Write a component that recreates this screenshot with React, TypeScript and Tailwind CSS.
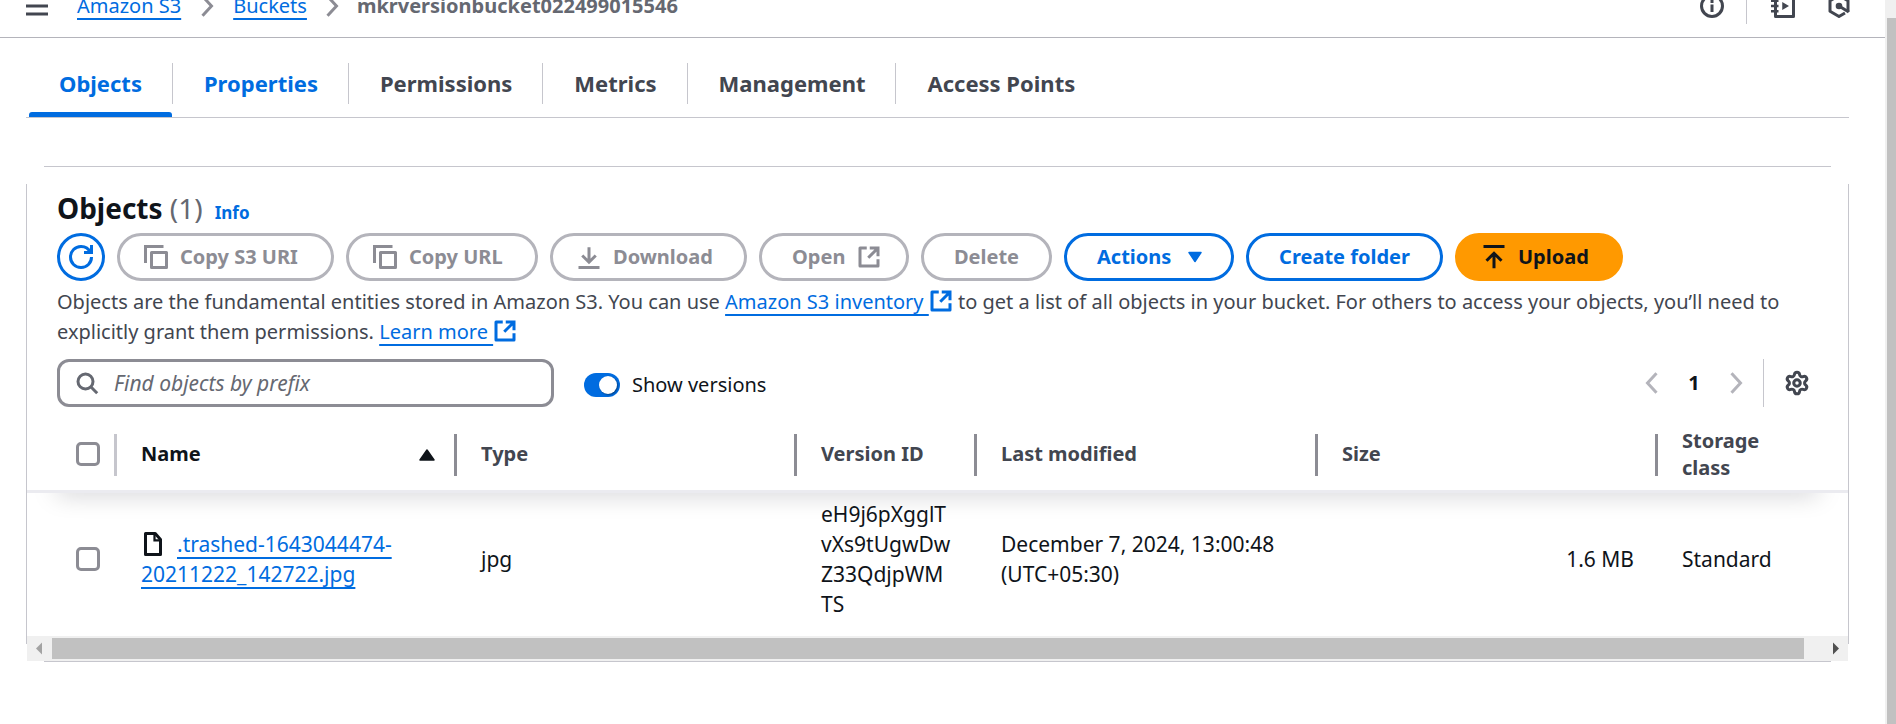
import React from "react";
import { Settings } from "lucide-react";

function Icon({ children, className = "" }: { children: React.ReactNode; className?: string }) {
  return (
    <svg
      viewBox="0 0 16 16"
      fill="none"
      stroke="currentColor"
      strokeWidth="2"
      aria-hidden="true"
      className={`h-6 w-6 shrink-0 ${className}`}
    >
      {children}
    </svg>
  );
}

const CopyIcon = () => (
  <Icon>
    <path d="M1 12V1h12" />
    <rect x="5" y="5" width="10" height="10" strokeLinejoin="round" />
  </Icon>
);

const ExternalIcon = ({ className = "" }: { className?: string }) => (
  <Icon className={className}>
    <path d="M6.500 2H2v12h12v-4.500" strokeLinejoin="round" />
    <path d="M8.500 2H14v5.500M14 2 7.500 8.500" />
  </Icon>
);

const Chevron = ({ left = false, className = "" }: { left?: boolean; className?: string }) => (
  <Icon className={className}>
    <path d={left ? "M11 1.500 5 8l6 6.500" : "M5 1.500 11 8l-6 6.500"} />
  </Icon>
);

const link = "text-[#006ce0] underline decoration-2 underline-offset-[5px]";

const buttonBase =
  "flex h-12 items-center gap-3 rounded-full border-3 text-[20px] font-bold whitespace-nowrap";
const disabledButton = `${buttonBase} border-[#b4b4bb] text-[#8c8c94]`;
const activeButton = `${buttonBase} border-[#006ce0] text-[#006ce0]`;

const tabs = [
  { label: "Objects", tone: "text-[#006ce0]", active: true },
  { label: "Properties", tone: "text-[#006ce0]" },
  { label: "Permissions", tone: "text-[#424650]" },
  { label: "Metrics", tone: "text-[#424650]" },
  { label: "Management", tone: "text-[#424650]" },
  { label: "Access Points", tone: "text-[#424650]" },
];

function TopBar() {
  return (
    <header className="-mt-[26px] flex h-16 items-center border-b border-[#b4b4bb] pr-[34px] pl-[25px]">
      <button aria-label="Open navigation" className="text-[#424650]">
        <svg viewBox="0 0 24 24" className="h-6 w-6" stroke="currentColor" strokeWidth="3" aria-hidden="true">
          <path d="M1 4h22M1 12h22M1 20h22" />
        </svg>
      </button>
      <nav aria-label="Breadcrumb" className="ml-7 flex flex-1 items-center text-[20px]">
        <a href="#s3" className={link}>Amazon S3</a>
        <Chevron className="mx-[14px] text-[#8c8c94]" />
        <a href="#buckets" className={link}>Buckets</a>
        <Chevron className="mx-[13px] text-[#8c8c94]" />
        <span className="font-bold text-[#656871]">mkrversionbucket022499015546</span>
      </nav>
      <div className="flex items-center text-[#424650]">
        <button aria-label="Info">
          <Icon>
            <circle cx="8" cy="8" r="7" />
            <path d="M8 7v5M8 4v2" />
          </Icon>
        </button>
        <span className="mr-6 ml-[22px] h-9 w-px bg-[#c6c6cd]" />
        <button aria-label="Tutorials" className="mr-8">
          <Icon>
            <path d="M3 1h12v14H3z" strokeLinejoin="round" />
            <path d="M0 4.500h5M0 8h5M0 11.500h5" strokeWidth="1.700" />
            <path d="M7.500 5.300v5.400L12 8z" fill="currentColor" stroke="none" />
          </Icon>
        </button>
        <button aria-label="Diagnostics">
          <Icon>
            <path d="M14 12V4.500L8 1 2 4.500v7L8 15l4-2.300" strokeLinejoin="round" />
            <circle cx="8" cy="8" r="2.200" fill="currentColor" stroke="none" />
            <path d="m8 8 6.500 4" />
          </Icon>
        </button>
      </div>
    </header>
  );
}

function Tabs() {
  return (
    <nav
      role="tablist"
      className="mt-3 flex h-[68px] items-center border-b border-[#c6c6cd] pl-[3px] text-[22px] font-bold"
    >
      {tabs.map((tab, i) => (
        <React.Fragment key={tab.label}>
          {i > 0 && <span className="mr-px h-[41px] w-px bg-[#c6c6cd]" />}
          <button
            role="tab"
            aria-selected={!!tab.active}
            className={`relative h-full px-[30px] pb-[2px] ${tab.tone}`}
          >
            {tab.label}
            {tab.active && (
              <span className="absolute inset-x-0 bottom-0 h-[5px] rounded-t-[3px] bg-[#006ce0]" />
            )}
          </button>
        </React.Fragment>
      ))}
    </nav>
  );
}

function Toolbar() {
  return (
    <div className="mt-[2px] flex gap-3">
      <button aria-label="Refresh" className={`${activeButton} w-12 justify-center`}>
        <Icon>
          <path d="M10 5h5V0" />
          <path d="M15 8a6.957 6.957 0 0 1-7 7 6.957 6.957 0 0 1-7-7 6.957 6.957 0 0 1 7-7 6.870 6.870 0 0 1 6.300 4" />
        </Icon>
      </button>
      <button disabled className={`${disabledButton} w-[217px] pl-6`}>
        <CopyIcon />
        Copy S3 URI
      </button>
      <button disabled className={`${disabledButton} w-[192px] pl-6`}>
        <CopyIcon />
        Copy URL
      </button>
      <button disabled className={`${disabledButton} w-[197px] pl-6`}>
        <Icon>
          <path d="M8 1.500V11M3.500 7 8 11.500 12.500 7M1 15h14" />
        </Icon>
        Download
      </button>
      <button disabled className={`${disabledButton} w-[150px] pl-[30px]`}>
        Open
        <ExternalIcon />
      </button>
      <button disabled className={`${disabledButton} w-[131px] justify-center`}>Delete</button>
      <button className={`${activeButton} w-[170px] pl-[30px]`}>
        Actions
        <Icon>
          <path d="M4 5h8l-4 6z" fill="currentColor" strokeWidth="1" strokeLinejoin="round" />
        </Icon>
      </button>
      <button className={`${activeButton} w-[197px] justify-center`}>Create folder</button>
      <button className={`${buttonBase} w-[168px] border-[#ff9900] bg-[#ff9900] pl-6 text-[#0f141a]`}>
        <Icon>
          <path d="M1 1h14M8 15.500V6M3 10.500 8 5.500l5 5" />
        </Icon>
        Upload
      </button>
    </div>
  );
}

function Filters() {
  return (
    <div className="mt-3 flex items-center">
      <label className="flex h-12 w-[497px] items-center gap-[15px] rounded-xl border-3 border-[#8c8c94] px-[15px]">
        <Icon className="text-[#656871]">
          <circle cx="7" cy="7" r="5" />
          <path d="m10.500 10.500 4.300 4.300" />
        </Icon>
        <input
          type="text"
          aria-label="Find objects by prefix"
          placeholder="Find objects by prefix"
          className="min-w-0 flex-1 bg-transparent text-[21px] outline-none placeholder:text-[#656871] placeholder:italic"
        />
      </label>
      <label className="mt-1 ml-[30px] flex items-center gap-3">
        <input
          type="checkbox"
          role="switch"
          defaultChecked
          className="flex h-6 w-9 appearance-none items-center justify-end rounded-full bg-[#006ce0] pr-[3px] before:h-[18px] before:w-[18px] before:rounded-full before:bg-white before:shadow-[1px_1px_2px_rgba(0,0,0,0.4)]"
        />
        Show versions
      </label>
      <div className="ml-auto flex items-center text-[#b4b4bb]">
        <button disabled aria-label="Previous page"><Chevron left /></button>
        <button className="mx-[18px] w-6 text-[20px] font-bold text-[#0f141a]">1</button>
        <button disabled aria-label="Next page"><Chevron /></button>
        <span className="mr-5 ml-[15px] h-12 w-px bg-[#c6c6cd]" />
        <button aria-label="Preferences" className="mr-2 text-[#424650]">
          <Settings size={26} strokeWidth={2.800} />
        </button>
      </div>
    </div>
  );
}

function HeadCell({
  label,
  sorted = false,
  last = false,
}: {
  label: string;
  sorted?: boolean;
  last?: boolean;
}) {
  return (
    <th className="border-b-3 border-[#ebebf0] p-0 text-left font-bold">
      <div className="flex h-[70px] items-center pl-6">
        <span className={`flex-1 pb-[3px] ${sorted ? "text-[#0f141a]" : ""} ${last ? "pr-20" : ""}`}>{label}</span>
        {sorted && (
          <svg viewBox="0 0 16 12" className="mr-[19px] h-3 w-4" aria-hidden="true">
            <path d="M8 1 15 11H1z" fill="#0f141a" stroke="#0f141a" strokeWidth="1.500" strokeLinejoin="round" />
          </svg>
        )}
        {!last && <span className="h-[42px] w-[3px] bg-[#8c8c94]" />}
      </div>
    </th>
  );
}

const checkbox = "block h-6 w-6 appearance-none rounded-[5px] border-3 border-[#8c8c94] bg-white";

function ObjectsTable() {
  return (
    <table className="mt-[13px] w-full table-fixed border-separate border-spacing-0">
      <colgroup>
        <col className="w-[90px]" />
        <col className="w-[340px]" />
        <col className="w-[340px]" />
        <col className="w-[180px]" />
        <col className="w-[341px]" />
        <col className="w-[340px]" />
        <col />
      </colgroup>
      <thead className="text-[20px] leading-[27px] text-[#424650] shadow-[0_30px_24px_-30px_rgba(0,7,22,0.25)]">
        <tr>
          <th className="border-b-3 border-[#ebebf0] p-0">
            <div className="flex h-[70px] items-center justify-between pl-[49px]">
              <input type="checkbox" aria-label="Select all objects" className={`${checkbox} mb-[3px]`} />
              <span className="h-[42px] w-[3px] bg-[#c6c6cd]" />
            </div>
          </th>
          <HeadCell label="Name" sorted />
          <HeadCell label="Type" />
          <HeadCell label="Version ID" />
          <HeadCell label="Last modified" />
          <HeadCell label="Size" />
          <HeadCell label="Storage class" last />
        </tr>
      </thead>
      <tbody className="text-[21px]">
        <tr>
          <td className="py-[6px] pl-[49px]">
            <input type="checkbox" aria-label="Select .trashed-1643044474-20211222_142722.jpg" className={checkbox} />
          </td>
          <td className="py-[6px] pr-12 pl-6">
            <Icon className="mr-3 inline-block align-[-4px]">
              <path d="M3 1h6.500L13 5v10H3z" strokeLinejoin="round" />
              <path d="M9 1v4.500h4" strokeWidth="1.500" />
            </Icon>
            <a href="#object" className={link}>
              .trashed-1643044474-<wbr />20211222_142722.jpg
            </a>
          </td>
          <td className="py-[6px] pl-6">jpg</td>
          <td className="py-[6px] pl-6">
            eH9j6pXgglT
            <br />
            vXs9tUgwDw
            <br />
            Z33QdjpWM
            <br />
            TS
          </td>
          <td className="px-6 py-[6px]">December 7, 2024, 13:00:48 (UTC+05:30)</td>
          <td className="py-[6px] pr-6 text-right">1.6 MB</td>
          <td className="py-[6px] pl-6">Standard</td>
        </tr>
      </tbody>
    </table>
  );
}

function HorizontalScrollbar() {
  return (
    <div className="mt-[11px] flex h-[25px] items-center bg-[#f0f0f0]">
      <svg viewBox="0 0 25 25" className="h-[25px] w-[25px]" aria-hidden="true">
        <path d="M15 6.500v12l-6-6z" fill="#a3a3a3" />
      </svg>
      <span className="h-[21px] flex-1 bg-[#c1c1c1]" />
      <svg viewBox="0 0 25 25" className="ml-[19px] h-[25px] w-[25px]" aria-hidden="true">
        <path d="M10 6.500v12l6-6z" fill="#505050" />
      </svg>
    </div>
  );
}

function ObjectsPanel() {
  return (
    <section className="relative mt-12 py-px">
      <span className="absolute inset-x-[18px] top-0 h-px bg-[#c6c6cd]" />
      <span className="absolute inset-y-[18px] left-0 w-px bg-[#c6c6cd]" />
      <span className="absolute inset-y-[18px] right-0 w-px bg-[#c6c6cd]" />
      <span className="absolute inset-x-[18px] bottom-0 h-px bg-[#c6c6cd]" />
      <div className="px-px">
        <div className="px-[30px] pt-[23px]">
          <div className="flex items-baseline leading-9">
            <h2 className="text-[28px] font-bold text-[#0f141a]">
              Objects <span className="font-normal text-[#656871]">(1)</span>
            </h2>
            <a href="#info" className="ml-3 text-[17px] font-bold text-[#006ce0]">Info</a>
          </div>
          <Toolbar />
          <p className="mt-[6px] text-[#424650]">
            Objects are the fundamental entities stored in Amazon S3. You can use{" "}
            <a href="#inventory" className="text-[#006ce0]">
              <span className={link}>Amazon S3 inventory </span>
              <ExternalIcon className="inline-block align-[-4px]" />
            </a>{" "}
            to get a list of all objects in your bucket. For others to access your objects, you’ll need to
            explicitly grant them permissions.{" "}
            <a href="#learn" className="text-[#006ce0]">
              <span className={link}>Learn more </span>
              <ExternalIcon className="inline-block align-[-4px]" />
            </a>
          </p>
          <Filters />
        </div>
        <ObjectsTable />
        <HorizontalScrollbar />
      </div>
    </section>
  );
}

export default function App() {
  return (
    <div className="flex min-h-screen overflow-hidden bg-white font-['Noto_Sans',sans-serif] text-[20px] leading-[30px] text-[#0f141a]">
      <div className="min-w-0 flex-1">
        <TopBar />
        <main className="pr-9 pl-[26px]">
          <Tabs />
          <ObjectsPanel />
        </main>
      </div>
      <div className="flex w-[11px] flex-col bg-[#f0f0f0] pt-[18px] pl-[2px]" aria-hidden="true">
        <span className="flex-1 bg-[#c1c1c1]" />
      </div>
    </div>
  );
}
